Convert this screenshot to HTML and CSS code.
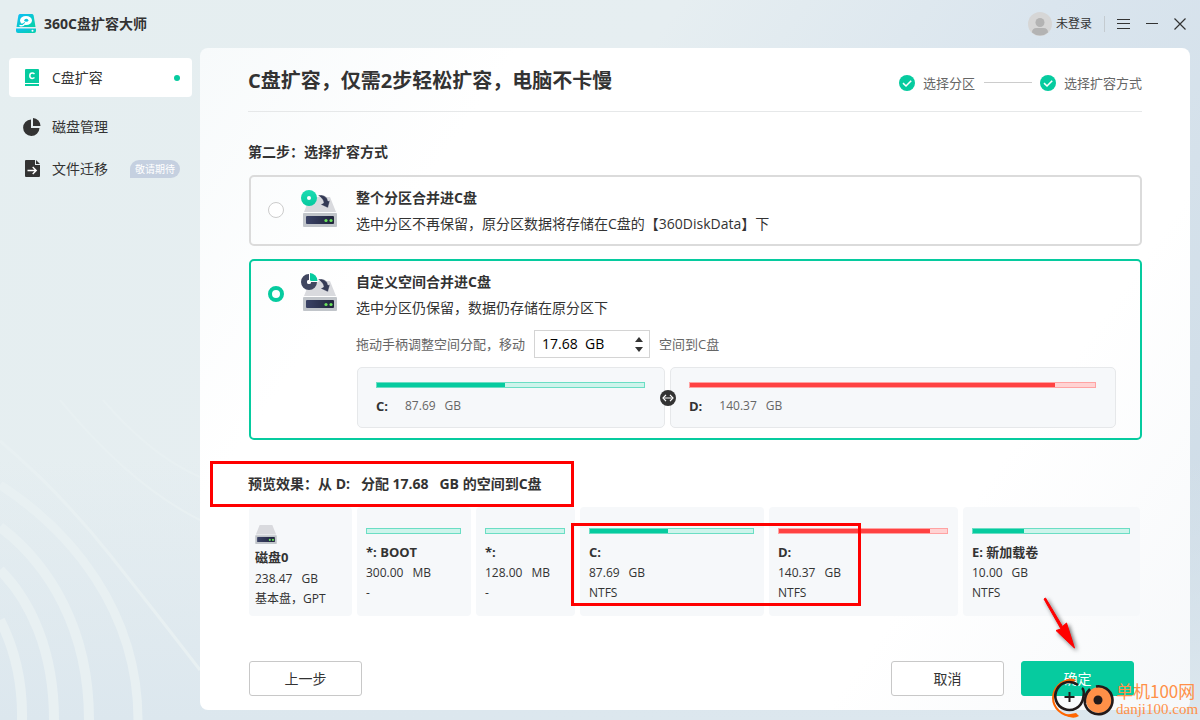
FILE: index.html
```html
<!DOCTYPE html>
<html lang="zh-CN">
<head>
<meta charset="utf-8">
<title>360C盘扩容大师</title>
<link rel="stylesheet" href="styles.css">
</head>
<body>
<svg class="defs" aria-hidden="true">
  <defs>
    <linearGradient id="logo-grad" x1="0" y1="0" x2="1" y2="1"><stop offset="0" stop-color="#10bdfb"/><stop offset="1" stop-color="#04d2a4"/></linearGradient>
    <linearGradient id="disc-grad" x1="0" y1="0" x2="0" y2="1"><stop offset="0" stop-color="#1cdcb2"/><stop offset="1" stop-color="#06c99f"/></linearGradient>
    <linearGradient id="slot-grad" x1="0" y1="0" x2="1" y2="0"><stop offset="0" stop-color="#3a4266"/><stop offset="1" stop-color="#20253c"/></linearGradient>
    <symbol id="drive" viewBox="0 0 34 30">
      <path d="M7 0h20l6 15H1z" fill="#d9dade"/>
      <rect y="16" width="34" height="14" rx="1" fill="#c1c5ca"/>
      <rect x="3" y="19" width="28" height="8" rx="1" fill="url(#slot-grad)"/>
      <circle cx="23" cy="23.500" r="1.600" fill="#6be35c"/><circle cx="28" cy="23.500" r="1.600" fill="#6be35c"/>
    </symbol>
    <symbol id="arrow" viewBox="0 0 12 13"><path d="M0 0.500C5-1 9.500 2 10 6l2-.5L10 13 2.500 9.500 5.500 8C5.500 5 3.500 2.500 0 .5z" fill="#343a55" stroke="#f4f5f7" stroke-width=".4"/></symbol>
    <symbol id="check" viewBox="0 0 16 16"><circle cx="8" cy="8" r="8" fill="#06cb9f"/><path d="M4 8.200l3 2.800 5.200-5.200" fill="none" stroke="#fff" stroke-width="1.600"/></symbol>
  </defs>
</svg>
<div class="app">
  <svg class="ripples" width="200" height="320" viewBox="0 0 200 320" aria-hidden="true">
    <g fill="none" stroke="#e8f0f2">
      <path d="M0 41Q60 92 110 155T200 270" stroke-width="3"/>
      <path d="M0 85C70 130 138 210 138 320" stroke-width="9"/>
      <path d="M0 127C50 165 89 230 89 320" stroke-width="10"/>
      <path d="M0 170C30 200 54 250 54 320" stroke-width="10"/>
      <path d="M0 220Q23 265 22 320" stroke-width="10"/>
      <path d="M60 0Q130 85 200 120M103 0Q150 55 200 77" stroke-width="2"/>
    </g>
  </svg>
  <header class="titlebar">
    <div class="brand">
      <svg width="20" height="20" viewBox="0 0 20 20" aria-hidden="true">
        <path d="M4.500 0h11c1.300 0 2 .6 2.200 1.700L19.500 13H.5L2.300 1.700C2.500.6 3.200 0 4.500 0z" fill="url(#logo-grad)"/>
        <path d="M0 14.500h20V17q0 2-2 2H2q-2 0-2-2z" fill="url(#logo-grad)"/>
        <ellipse cx="10" cy="6.500" rx="6" ry="4.500" fill="#fff"/>
        <path d="M3.500 11.300c2 .8 4 .3 5-1" fill="none" stroke="#fff" stroke-width="1.300"/>
        <ellipse cx="10.300" cy="6.300" rx="2" ry="1.500" fill="#08c6dc"/>
        <path d="M5.500 10.500L9 8.500" stroke="#08c6dc"/>
        <circle cx="16.500" cy="16.800" r="1" fill="#fff"/>
      </svg>
      <span>360C盘扩容大师</span>
    </div>
    <div class="window-tools">
      <button class="account" type="button">
        <svg width="24" height="24" viewBox="0 0 24 24" aria-hidden="true"><circle cx="12" cy="12" r="12" fill="#d6d6d6"/><circle cx="12" cy="10.500" r="4.500" fill="#b3b3b3"/><path d="M4 20.500q0-4.500 4.500-4.500h7q4.500 0 4.500 4.500a12 12 0 0 1-16 0z" fill="#b3b3b3"/></svg>
        <span>未登录</span>
      </button>
      <span class="divider"></span>
      <button type="button" aria-label="菜单"><svg width="13" height="12" viewBox="0 0 13 12"><path d="M0 1.500h13M0 5.500h13M0 10.500h13" stroke="#333"/></svg></button>
      <button type="button" aria-label="最小化"><svg width="12" height="12" viewBox="0 0 12 12"><path d="M0 5.500h12" stroke="#333"/></svg></button>
      <button type="button" aria-label="关闭"><svg width="12" height="12" viewBox="0 0 12 12"><path d="M.5.5l11 11M11.500.5l-11 11" stroke="#333" stroke-width="1.200"/></svg></button>
    </div>
  </header>

  <div class="workspace">
    <nav class="sidebar">
      <a class="nav-item active" href="#expand">
        <svg width="18" height="18" viewBox="0 0 18 18" aria-hidden="true"><path d="M3 0h12q1 0 1 1v13H2V1q0-1 1-1zM2 15h14v2H2z" fill="#06cb9f"/><path d="M11.500 5q-1-1-2.200-1C7.800 4 6.800 5.100 6.800 6.700S7.800 9.400 9.300 9.400q1.200 0 2.200-.9" fill="none" stroke="#fff" stroke-width="1.500"/></svg>
        <span>C盘扩容</span><i class="dot"></i>
      </a>
      <a class="nav-item" href="#manage">
        <svg width="18" height="18" viewBox="0 0 18 18" aria-hidden="true"><path d="M8 1.500V10h8.500A8.200 8.200 0 1 1 8 1.500z" fill="#333"/><path d="M10 0a8 8 0 0 1 7.500 8H10z" fill="#333"/></svg>
        <span>磁盘管理</span>
      </a>
      <a class="nav-item" href="#migrate">
        <svg width="18" height="18" viewBox="0 0 18 18" aria-hidden="true"><path d="M3 0h9v5h5v11q0 1-1 1H3q-1 0-1-1V1q0-1 1-1z" fill="#333"/><path d="M13 0l4 4h-4z" fill="#333"/><path d="M4.500 10.500H13M9.700 7l3.500 3.500L9.700 14" fill="none" stroke="#fff" stroke-width="1.400"/></svg>
        <span>文件迁移</span><em class="badge">敬请期待</em>
      </a>
    </nav>

    <main class="panel">
      <div class="panel-head">
        <h1>C盘扩容，仅需2步轻松扩容，电脑不卡慢</h1>
        <ol class="steps">
          <li><svg width="16" height="16" aria-hidden="true"><use href="#check"/></svg>选择分区</li>
          <li><svg width="16" height="16" aria-hidden="true"><use href="#check"/></svg>选择扩容方式</li>
        </ol>
      </div>

      <form class="wizard">
        <h2>第二步：选择扩容方式</h2>
        <section class="option">
          <input type="radio" name="mode" id="mode-whole">
          <svg class="option-icon" width="38" height="40" viewBox="0 0 38 40" aria-hidden="true">
            <use href="#drive" x="3" y="9" width="34" height="30"/>
            <circle cx="9" cy="10" r="8" fill="url(#disc-grad)"/><circle cx="9" cy="10" r="2" fill="#fff"/>
            <use href="#arrow" x="18" y="7" width="12" height="13"/>
          </svg>
          <div class="option-body">
            <label for="mode-whole"><strong>整个分区合并进C盘</strong><span>选中分区不再保留，原分区数据将存储在C盘的【360DiskData】下</span></label>
          </div>
        </section>

        <section class="option selected">
          <input type="radio" name="mode" id="mode-custom" checked>
          <svg class="option-icon" width="38" height="40" viewBox="0 0 38 40" aria-hidden="true">
            <use href="#drive" x="3" y="9" width="34" height="30"/>
            <circle cx="9" cy="10" r="5" fill="none" stroke="#414760" stroke-width="6"/>
            <path d="M9 10V1h9.500v9z" fill="#fff"/><path d="M10 9V1a8 8 0 0 1 7.500 8z" fill="#06cb9f"/><circle cx="9" cy="10" r="2" fill="#fff"/>
            <use href="#arrow" x="18" y="7" width="12" height="13"/>
          </svg>
          <div class="option-body">
            <label for="mode-custom"><strong>自定义空间合并进C盘</strong><span>选中分区仍保留，数据仍存储在原分区下</span></label>
            <div class="adjust">
              <label for="amount">拖动手柄调整空间分配，移动</label>
              <div class="spinner">
                <input type="text" id="amount" value="17.68&nbsp;&nbsp;GB">
                <div class="spin-buttons">
                  <button type="button" aria-label="增加"><svg width="8" height="5" viewBox="0 0 8 5"><path d="M0 5l4-5 4 5z" fill="#333"/></svg></button>
                  <button type="button" aria-label="减少"><svg width="8" height="5" viewBox="0 0 8 5"><path d="M0 0l4 5 4-5z" fill="#333"/></svg></button>
                </div>
              </div>
              <span>空间到C盘</span>
            </div>
            <div class="split">
              <div class="volume"><div class="bar"><i style="width:48%"></i></div><p><b>C:</b><span class="size"><span>87.69</span> <span>GB</span></span></p></div>
              <div class="volume"><div class="bar red"><i style="width:90%"></i></div><p><b>D:</b><span class="size"><span>140.37</span> <span>GB</span></span></p></div>
              <button class="handle" type="button" aria-label="调整分配"><svg width="16" height="16" viewBox="0 0 16 16"><circle cx="8" cy="8" r="8" fill="#333"/><path d="M4.500 8h7M6 4.800L3 8l3 3.200M10 4.800L13 8l-3 3.200" fill="none" stroke="#fff" stroke-width="1.200"/></svg></button>
            </div>
          </div>
        </section>

        <h2 class="preview-title">预览效果：从 D:&nbsp;&nbsp; 分配 17.68&nbsp;&nbsp; GB 的空间到C盘</h2>
        <div class="disks">
          <div class="disk first">
            <svg width="22" height="19" aria-hidden="true"><use href="#drive"/></svg>
            <b>磁盘0</b><span class="size"><span>238.47</span> <span>GB</span></span><span>基本盘，GPT</span>
          </div>
          <div class="disk"><div class="bar"></div><b>*: BOOT</b><span class="size"><span>300.00</span> <span>MB</span></span><span>-</span></div>
          <div class="disk"><div class="bar"></div><b>*:</b><span class="size"><span>128.00</span> <span>MB</span></span><span>-</span></div>
          <div class="disk"><div class="bar"><i style="width:48%"></i></div><b>C:</b><span class="size"><span>87.69</span> <span>GB</span></span><span>NTFS</span></div>
          <div class="disk"><div class="bar red"><i style="width:90%"></i></div><b>D:</b><span class="size"><span>140.37</span> <span>GB</span></span><span>NTFS</span></div>
          <div class="disk"><div class="bar"><i style="width:33%"></i></div><b>E: 新加载卷</b><span class="size"><span>10.00</span> <span>GB</span></span><span>NTFS</span></div>
        </div>

        <div class="actions">
          <button class="btn back" type="button">上一步</button>
          <button class="btn" type="button">取消</button>
          <button class="btn primary" type="submit">确定</button>
        </div>
      </form>
    </main>
  </div>

  <div class="mark mark-title"></div>
  <div class="mark mark-disks"></div>
  <svg class="pointer" width="48" height="64" viewBox="0 0 48 64" aria-hidden="true"><path d="M4 7L5.500 6 22.500 34.500l4-3.500L34.500 56 16 38.500l5-1.500z" fill="#f00" stroke="#f00" stroke-linejoin="round"/></svg>
  <div class="watermark">
    <svg width="64" height="44" viewBox="0 0 64 44" aria-hidden="true">
      <path d="M21 4C9 4 2 13 2 22s8 19 22 18" fill="none" stroke="#f60" stroke-width="2"/><path d="M12 6q7-6 13-2l-3 2zM14 39q8 5 14 1l-3-3z" fill="#f60"/>
      <path d="M27 9A14 14 0 1 0 32 23Q34 14 31 12" fill="none" stroke="#231a1a" stroke-width="2.600"/>
      <path d="M18.500 16v10M13.500 21h10" stroke="#231a1a" stroke-width="2"/>
      <circle cx="48" cy="24" r="13" fill="#ff9048"/><path d="M45 10.500A14 14 0 1 1 34 28c-1-7 1-11 5-15" fill="none" stroke="#231a1a" stroke-width="2.600"/><circle cx="47" cy="24" r="4.500" fill="#231a1a"/>
    </svg>
    <div><strong>单机100网</strong><span>danji100.com</span></div>
  </div>
</div>
</body>
</html>
```
FILE: styles.css
```css
* { box-sizing: border-box; }
body {
  margin: 0;
  color: #333;
  font: 14px/20px "Open Sans", "Noto Sans CJK SC", sans-serif;
  background:
    linear-gradient(to top, #dce7ee 0, transparent 260px),
    linear-gradient(125deg, #e5eef0 0%, #e6eef1 40%, #dae5ee 62%, #cddbe6 100%);
}
h1, h2, p, ol { margin: 0; padding: 0; }
button { padding: 0; border: 0; background: none; color: inherit; font: inherit; cursor: pointer; }
svg { display: block; flex: none; }
b, strong { font-weight: 700; }
.defs { position: absolute; width: 0; height: 0; }

.app { position: relative; display: flex; flex-direction: column; min-height: 100vh; overflow: hidden; }
.ripples { position: absolute; left: 0; bottom: 0; }
.titlebar { display: flex; justify-content: space-between; align-items: center; height: 48px; padding: 0 14px 0 16px; }
.brand { display: flex; align-items: center; gap: 8px; font-weight: 700; }
.window-tools { display: flex; align-items: center; gap: 16px; }
.account { display: flex; align-items: center; gap: 4px; font-size: 12px; }
.divider { width: 1px; height: 16px; margin: 0 -4px; background: #c4cbd0; }

.workspace { position: relative; display: flex; flex: 1; padding: 0 10px 10px 0; }
.sidebar { display: flex; flex-direction: column; gap: 2px; flex: 0 0 200px; padding: 10px 8px 0 9px; }
.nav-item { display: flex; align-items: center; height: 40px; padding: 0 12px 0 14px; border-radius: 4px; color: inherit; text-decoration: none; }
.nav-item svg { margin-right: 11px; }
.nav-item.active { height: 39px; margin-bottom: 8px; background: #fff; }
.dot { width: 6px; height: 6px; margin-left: auto; border-radius: 50%; background: #06cb9f; }
.badge { margin-left: auto; padding: 0 5px; border-radius: 9px 9px 9px 0; background: #c5d0e0; color: #fff; font: 10px/18px "Noto Sans CJK SC", sans-serif; }

.panel { flex: 1; min-width: 0; padding: 0 48px 14px; border-radius: 8px; background: linear-gradient(125deg, #f7fafb 0%, #fff 22%, #fff 75%, #f6f8fa 100%); }
.panel-head { display: flex; justify-content: space-between; align-items: center; height: 64px; border-bottom: 1px solid #e6e8e9; }
h1 { padding-top: 2px; font-size: 20px; line-height: 28px; font-weight: 700; }
.steps { display: flex; margin-top: 6px; list-style: none; color: #666; font-size: 13px; }
.steps li { display: flex; align-items: center; gap: 8px; }
.steps li + li::before { content: ""; width: 48px; height: 1px; margin-left: 9px; background: #ccc; }
h2 { font-size: 14px; line-height: 20px; font-weight: 700; }
.wizard { padding-top: 30px; }

.option { display: flex; align-items: flex-start; margin: 13px 0 0 1px; padding: 11px 24px 10px 17px; border: 2px solid #dbdbdb; border-radius: 5px; }
.option.selected { border-color: #06cb9f; }
.option > input { appearance: none; flex: none; width: 16px; height: 16px; margin: 14px 16px 0 0; border: 1px solid #ccc; border-radius: 50%; background: #fff; }
.option > input:checked { border: 4px solid #06cb9f; }
.option-icon { margin-right: 18px; }
.option-body { flex: 1; min-width: 0; }
.option-body > label { display: flex; flex-direction: column; gap: 6px; }
.adjust { display: flex; align-items: center; gap: 9px; margin-top: 12px; color: #666; font-size: 13px; }
.spinner { display: flex; align-items: center; justify-content: space-between; width: 116px; height: 28px; padding: 0 6px 0 7px; border: 1px solid #d4d4d4; background: #fff; }
.spinner input { width: 80px; padding: 0; border: 0; outline: 0; background: none; color: #000; font: inherit; font-size: 14px; }
.spin-buttons { display: flex; flex-direction: column; gap: 5px; }
.spin-buttons button { display: block; }

.split { position: relative; display: grid; grid-template-columns: 308fr 446fr; gap: 5px; margin: 9px 0 0 1px; }
.volume { padding: 14px 19px 11px 18px; border: 1px solid #e6e8ea; border-radius: 5px; background: #f6f8fa; }
.volume p { display: flex; gap: 17px; margin-top: 8px; font-size: 13px; }
.volume .size { color: #666; font-size: 12px; }
.handle { position: absolute; left: 41%; top: 50%; transform: translate(-50%, -50%); }
.bar { height: 6px; border: 1px solid #6bdec4; background: #cdf4eb; }
.bar i { display: block; height: 100%; background: #06cb9f; }
.bar.red { border-color: #ffa3a3; background: #ffd3d3; }
.bar.red i { background: #ff4242; }
.size { display: flex; gap: 9px; }

.preview-title { margin-top: 34px; }
.disks { display: grid; grid-template-columns: 103fr 114fr 99fr 184fr 189fr 177fr; gap: 5px; margin: 13px 2px 0 1px; }
.disk { display: flex; flex-direction: column; min-width: 0; min-height: 109px; padding: 21px 10px 12px 9px; border-radius: 4px; background: #f6f8fa; font-size: 12px; white-space: nowrap; }
.disk .bar { margin-bottom: 8px; }
.disk b { margin-bottom: 1px; font-size: 13px; }
.disk.first { padding: 18px 6px 7px; }
.disk.first svg { margin-bottom: 3px; }
.disk.first b { margin-bottom: 2px; }

.actions { display: flex; gap: 17px; margin: 45px 8px 0 1px; }
.btn { width: 113px; height: 35px; border: 1px solid #c8c8c8; border-radius: 3px; background: #fff; }
.btn.back { margin-right: auto; }
.btn.primary { border-color: #06cb9f; background: #06cb9f; color: #fff; }

.mark { position: absolute; border: 3px solid #f00; pointer-events: none; }
.mark-title { left: 210px; top: 461px; width: 364px; height: 46px; }
.mark-disks { left: 571px; top: 523px; width: 290px; height: 83px; }
.pointer { position: absolute; left: 1040px; top: 592px; filter: drop-shadow(2px 2px 2px #666); pointer-events: none; }
.watermark { position: absolute; left: 1051px; top: 676px; display: flex; gap: 1px; color: #ff9048; white-space: nowrap; pointer-events: none; }
.watermark div { display: flex; flex-direction: column; padding-top: 5px; }
.watermark strong { font: 17px/20px "Noto Sans CJK SC", sans-serif; }
.watermark span { font: 15px/16px "Liberation Serif", serif; }
```
